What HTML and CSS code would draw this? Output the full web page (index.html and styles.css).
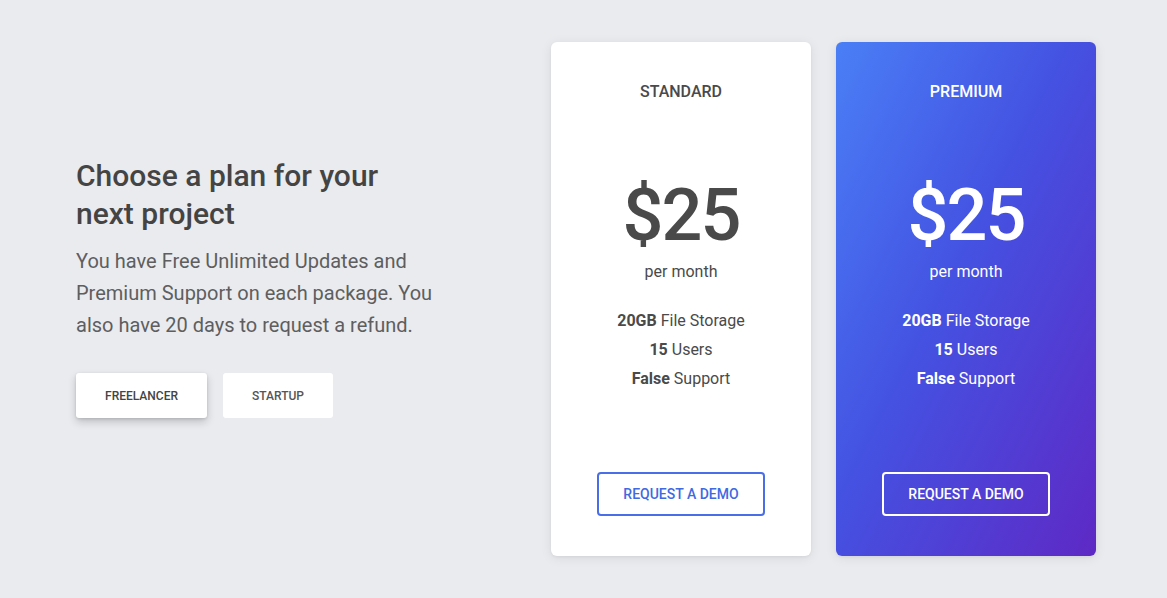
FILE: index.html
```html
<!DOCTYPE html>
<html lang="en">
<head>
<meta charset="utf-8">
<title>Pricing</title>
<link rel="stylesheet" href="styles.css">
</head>
<body>
<section class="pricing">
  <div class="intro">
    <h2 class="intro-title">Choose a plan for your next project</h2>
    <p class="intro-text">You have Free Unlimited Updates and Premium Support on each package. You also have 20 days to request a refund.</p>
    <div class="tabs">
      <button class="tab tab-active">Freelancer</button>
      <button class="tab">Startup</button>
    </div>
  </div>
  <div class="cards">
    <div class="card card-plain">
      <h6 class="card-category">Standard</h6>
      <div class="price">$25</div>
      <div class="period">per month</div>
      <ul class="features">
        <li><b>20GB</b> File Storage</li>
        <li><b>15</b> Users</li>
        <li><b>False</b> Support</li>
      </ul>
      <button class="demo">Request a demo</button>
    </div>
    <div class="card card-premium">
      <h6 class="card-category">Premium</h6>
      <div class="price">$25</div>
      <div class="period">per month</div>
      <ul class="features">
        <li><b>20GB</b> File Storage</li>
        <li><b>15</b> Users</li>
        <li><b>False</b> Support</li>
      </ul>
      <button class="demo">Request a demo</button>
    </div>
  </div>
</section>
</body>
</html>
```

FILE: styles.css
```css
* { box-sizing: border-box; }
html, body {
  margin: 0;
  padding: 0;
}
body {
  background: #eaebef;
  font-family: Roboto, "Liberation Sans", Arial, sans-serif;
  color: #555;
  width: 1167px;
  height: 598px;
  overflow: hidden;
}
.pricing {
  display: flex;
  align-items: flex-start;
  padding: 42px 0 0 76px;
}
.intro {
  width: 360px;
  margin-top: 115px;
}
.intro-title {
  margin: 0;
  font-size: 30px;
  line-height: 38px;
  font-weight: 500;
  color: #444;
}
.intro-text {
  margin: 12px 0 0;
  font-size: 20px;
  line-height: 32px;
  color: #5e5e5e;
}
.tabs {
  display: flex;
  gap: 16px;
  margin-top: 32px;
}
.tab {
  height: 45px;
  border: 0;
  border-radius: 3px;
  background: #fff;
  font-family: inherit;
  font-size: 12px;
  font-weight: 500;
  text-transform: uppercase;
  color: #555;
  padding: 0;
  width: 110px;
}
.tab-active {
  width: 131px;
  box-shadow: 0 4px 8px rgba(0,0,0,0.18), 0 1px 3px rgba(0,0,0,0.12);
  color: #444;
}
.cards {
  display: flex;
  gap: 25px;
  margin-left: 115px;
}
.card {
  width: 260px;
  height: 514px;
  border-radius: 6px;
  display: flex;
  flex-direction: column;
  align-items: center;
  padding: 39px 0 40px;
  box-shadow: 0 2px 12px rgba(0,0,0,0.08), 0 1px 3px rgba(0,0,0,0.05);
  text-align: center;
}
.card-plain {
  background: #fff;
  color: #4a4a4a;
}
.card-premium {
  background: linear-gradient(to bottom right, #4a7ff6 0%, #4452e2 45%, #5e29c5 100%);
  color: #fff;
}
.card-category {
  margin: 0;
  font-size: 16px;
  line-height: 22px;
  font-weight: 500;
  text-transform: uppercase;
}
.price {
  margin-top: 77px;
  font-size: 72px;
  line-height: 72px;
  font-weight: 500;
  letter-spacing: -2px;
}
.period {
  margin-top: 8px;
  font-size: 16px;
  line-height: 24px;
}
.features {
  list-style: none;
  margin: 22px 0 0;
  padding: 0;
  font-size: 16px;
  line-height: 29px;
}
.features b { font-weight: 700; }
.demo {
  margin-top: auto;
  width: 168px;
  height: 44px;
  background: transparent;
  border: 2px solid #4a6ee6;
  border-radius: 4px;
  font-family: inherit;
  font-size: 14px;
  font-weight: 500;
  text-transform: uppercase;
  color: #4169e1;
  padding: 0;
}
.card-premium .demo {
  border-color: #fff;
  color: #fff;
}
```
